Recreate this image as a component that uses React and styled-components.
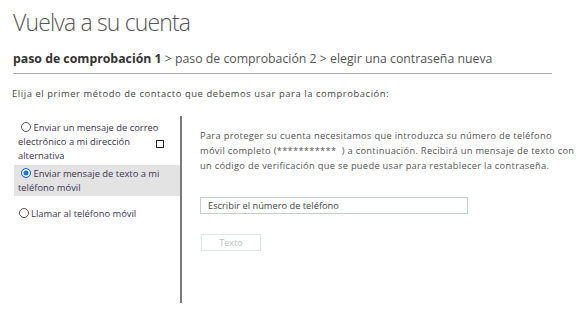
import React from "react";
import styled, { createGlobalStyle } from "styled-components";

const Global = createGlobalStyle`
  html, body { margin: 0; padding: 0; background: #fff; }
  body { font-family: "Open Sans", "Noto Sans", sans-serif; color: #444; }
`;

const Page = styled.div`
  width: 587px;
  height: 311px;
  padding: 6px 0 0 13px;
  box-sizing: border-box;
  overflow: hidden;
`;

const Title = styled.h1`
  margin: 0;
  font-family: "Open Sans", "Noto Sans", sans-serif;
  font-weight: 300;
  font-size: 23px;
  line-height: 32px;
  color: #555;
  letter-spacing: -0.85px;
`;

const Crumbs = styled.div`
  width: 539px;
  margin-top: 13px;
  padding-bottom: 6px;
  border-bottom: 1.5px solid #aaa;
  font-size: 12.3px;
  line-height: 16px;
  color: #555;
`;

const Strong = styled.b`
  font-weight: 700;
  color: #333;
`;

const Instruction = styled.p`
  margin: 14px 0 0 -1px;
  font-size: 9.4px;
  letter-spacing: 0.58px;
  line-height: 12px;
  color: #444;
`;

const Columns = styled.div`
  display: flex;
  margin-top: 16px;
`;

const Left = styled.div`
  width: 168px;
  height: 187px;
  border-right: 2px solid #7a7a7a;
  padding-top: 3px;
  box-sizing: border-box;
  margin-left: 1px;
`;

const Option = styled.label`
  display: block;
  padding: 2px 8px 1px 4px;
  margin-bottom: ${(p) => p.$gap || 0}px;
  background: ${(p) => (p.$active ? "#e3e3e3" : "transparent")};
  font-size: 9.4px;
  line-height: 14.2px;
  color: #3d3550;
  position: relative;
`;

const Radio = styled.span`
  display: inline-block;
  width: 8px;
  height: 8px;
  border-radius: 50%;
  border: 1px solid #555;
  vertical-align: -1px;
  margin: 0 2px 0 1px;
  background: ${(p) => (p.$on ? "#1a73e8" : "#fff")};
  box-shadow: ${(p) => (p.$on ? "inset 0 0 0 1.5px #fff" : "none")};
  border-color: ${(p) => (p.$on ? "#1a73e8" : "#555")};
`;

const Box = styled.span`
  position: absolute;
  left: 142px;
  top: 21px;
  width: 6px;
  height: 6px;
  border: 1px solid #222;
`;

const Right = styled.div`
  padding: 12px 0 0 18px;
`;

const Para = styled.p`
  margin: 0;
  width: 380px;
  font-size: 9.3px;
  letter-spacing: 0.3px;
  line-height: 15px;
  color: #555;
`;

const Input = styled.div`
  margin-top: 24px;
  width: 268px;
  height: 17px;
  border: 1px solid #c5cfca;
  box-sizing: border-box;
  font-size: 9.3px;
  line-height: 15px;
  padding-left: 7px;
  color: #444;
`;

const Button = styled.div`
  margin-top: 20px;
  margin-left: 1px;
  width: 60px;
  height: 17px;
  border: 1px solid #dfe6e4;
  box-sizing: border-box;
  font-size: 9px;
  line-height: 15px;
  text-align: center;
  color: #b8c0c0;
`;

export default function App() {
  return (
    <>
      <Global />
      <Page>
        <Title>Vuelva a su cuenta</Title>
        <Crumbs>
          <Strong>paso de comprobación 1</Strong> &gt; paso de comprobación 2 &gt; elegir una contraseña nueva
        </Crumbs>
        <Instruction>Elija el primer método de contacto que debemos usar para la comprobación:</Instruction>
        <Columns>
          <Left>
            <Option>
              &nbsp;<Radio />Enviar un mensaje de correo electrónico a mi dirección alternativa
              <Box />
            </Option>
            <Option $active $gap={9}>
              &nbsp;<Radio $on />Enviar mensaje de texto a mi teléfono móvil
            </Option>
            <Option>
              <Radio />Llamar al teléfono móvil
            </Option>
          </Left>
          <Right>
            <Para>
              Para proteger su cuenta necesitamos que introduzca su número de teléfono
              <br />
              móvil completo (***********&nbsp;&nbsp;) a continuación. Recibirá un mensaje de texto con
              <br />
              un código de verificación que se puede usar para restablecer la contraseña.
            </Para>
            <Input>Escribir el número de teléfono</Input>
            <Button>Texto</Button>
          </Right>
        </Columns>
      </Page>
    </>
  );
}
